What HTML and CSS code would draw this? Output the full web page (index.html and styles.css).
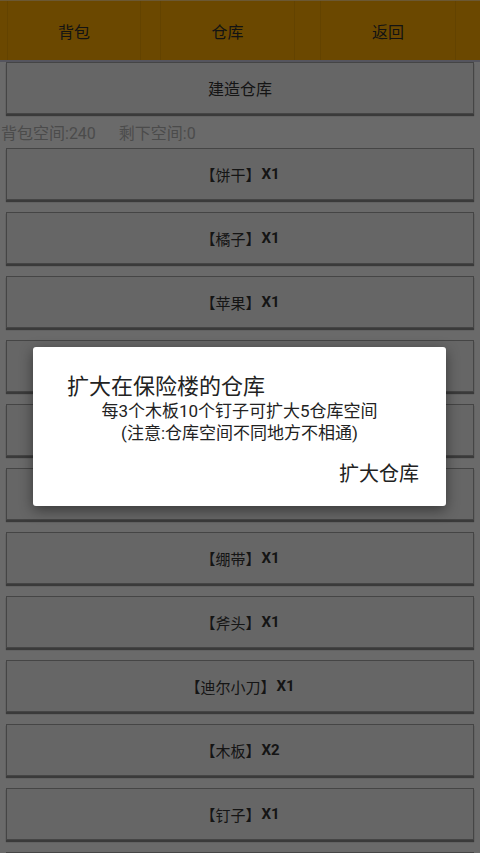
FILE: index.html
```html
<!DOCTYPE html>
<html lang="zh">
<head>
<meta charset="utf-8">
<title>仓库</title>
<link rel="stylesheet" href="styles.css">
</head>
<body>
<header class="topbar">
  <div class="tab tab-1">背包</div>
  <div class="tab tab-2">仓库</div>
  <div class="tab tab-3">返回</div>
</header>
<main class="content">
  <div class="btn">建造仓库</div>
  <div class="stats"><span>背包空间:240</span><span>剩下空间:0</span></div>
  <div class="btn item">【饼干】<b>X1</b></div>
  <div class="btn item">【橘子】<b>X1</b></div>
  <div class="btn item">【苹果】<b>X1</b></div>
  <div class="btn item">【面包】<b>X1</b></div>
  <div class="btn item">【矿泉水】<b>X1</b></div>
  <div class="btn item">【罐头】<b>X1</b></div>
  <div class="btn item">【绷带】<b>X1</b></div>
  <div class="btn item">【斧头】<b>X1</b></div>
  <div class="btn item">【迪尔小刀】<b>X1</b></div>
  <div class="btn item">【木板】<b>X2</b></div>
  <div class="btn item">【钉子】<b>X1</b></div>
  <div class="btn item">【布料】<b>X1</b></div>
</main>
<div class="overlay">
  <div class="dialog">
    <div class="dialog-title">扩大在保险楼的仓库</div>
    <div class="dialog-body">
      <div>每3个木板10个钉子可扩大5仓库空间</div>
      <div>(注意:仓库空间不同地方不相通)</div>
    </div>
    <div class="dialog-actions"><span class="dialog-btn">扩大仓库</span></div>
  </div>
</div>
</body>
</html>
```
FILE: styles.css
```css
html, body {
  margin: 0;
  padding: 0;
}
body {
  width: 480px;
  height: 853px;
  overflow: hidden;
  background: #fdfdfd;
  font-family: "Roboto", "Noto Sans CJK SC", sans-serif;
  color: #333;
  position: relative;
}
.topbar {
  height: 60px;
  box-sizing: border-box;
  background: #ffad00;
  border-top: 1px solid #ffd27a;
  border-bottom: 2px solid #cbcbe0;
  display: flex;
  padding-left: 7px;
  height: 62px;
}
.tab {
  height: 59px;
  display: flex;
  align-items: center;
  justify-content: center;
  font-size: 16px;
  color: #2e2e2e;
  border-left: 1px solid rgba(0,0,0,0.07);
  border-right: 1px solid rgba(0,0,0,0.07);
  box-sizing: border-box;
}
.tab-1 { width: 134px; margin-right: 19px; }
.tab-2 { width: 135px; margin-right: 25px; }
.tab-3 { width: 136px; }
.content {
  padding: 0 6px;
  display: flex;
  flex-direction: column;
}
.btn {
  height: 52px;
  box-sizing: border-box;
  background: #f2f2f2;
  border: 1px solid #a4a4a4;
  box-shadow: 0 2px 1px rgba(0,0,0,0.45);
  display: flex;
  align-items: center;
  justify-content: center;
  font-size: 16px;
  color: #333;
  margin-bottom: 12px;
}
.item {
  font-size: 15px;
}
.item b {
  font-weight: 700;
  margin-left: 1px;
}
.stats {
  height: 34px;
  box-sizing: border-box;
  padding-top: 9px;
  line-height: 22px;
  font-size: 16px;
  color: #b4b4b4;
  margin: -12px -6px 0 -5px;
  display: flex;
  gap: 23px;
}
.overlay {
  position: absolute;
  inset: 0;
  background: rgba(0,0,0,0.58);
}
.dialog {
  position: absolute;
  left: 33px;
  top: 347px;
  width: 413px;
  height: 159px;
  box-sizing: border-box;
  background: #fff;
  border-radius: 3px;
  box-shadow: 0 4px 14px rgba(0,0,0,0.45);
  color: #222;
  padding-top: 27px;
}
.dialog-title {
  font-size: 22px;
  line-height: 26px;
  padding-left: 34px;
}
.dialog-body {
  font-size: 17px;
  line-height: 22px;
  text-align: center;
}
.dialog-actions {
  display: flex;
  justify-content: flex-end;
  padding-right: 27px;
  margin-top: 18px;
}
.dialog-btn {
  font-size: 20px;
  line-height: 24px;
}
```
